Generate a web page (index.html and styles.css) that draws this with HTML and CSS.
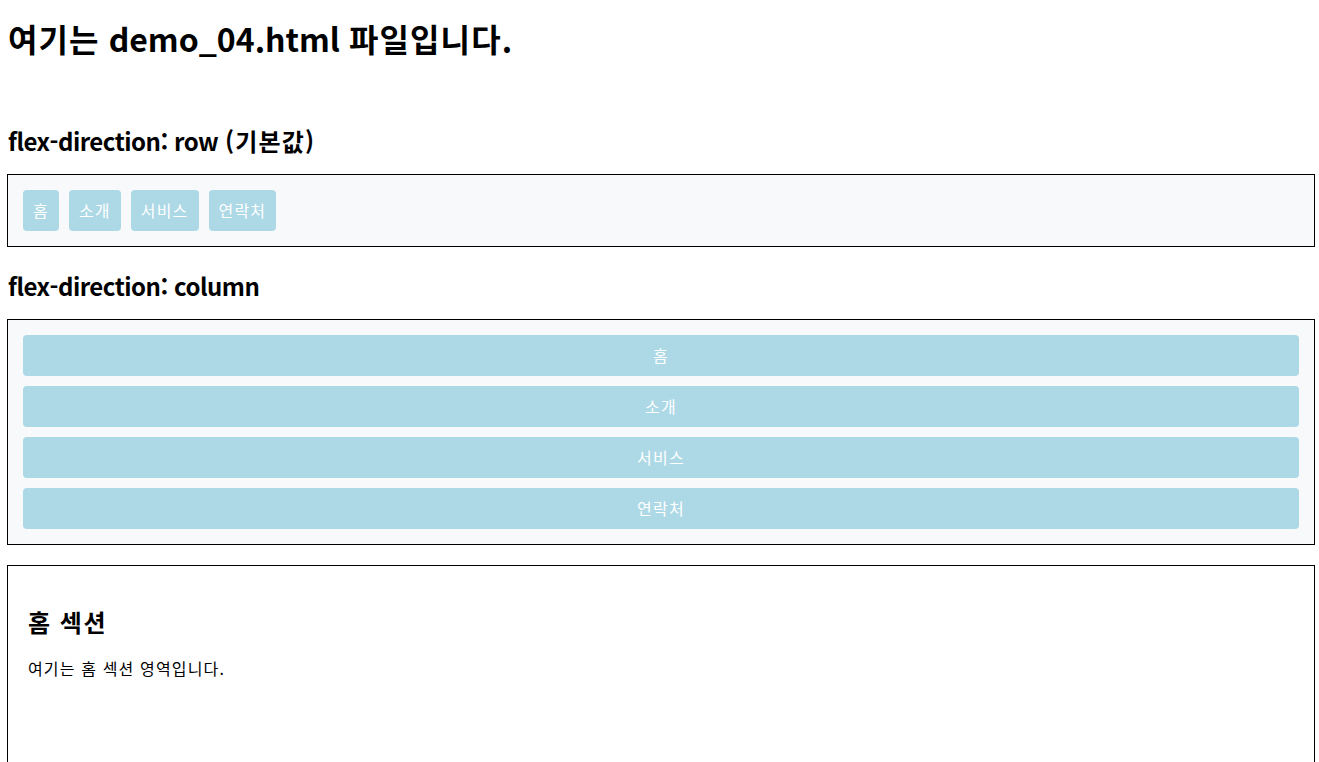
FILE: index.html
```html
<!DOCTYPE html>
<html lang="ko">
<head>
<meta charset="utf-8">
<title>demo_04</title>
<link rel="stylesheet" href="styles.css">
</head>
<body>
<h1 class="page-title"><span class="ko">여기는</span> demo_04.html <span class="ko">파일입니다.</span></h1>

<h2 class="demo-heading"><span class="latin">flex-direction: row</span> <span class="ko">(기본값)</span></h2>
<nav class="menu menu-row">
  <a class="menu-item">홈</a>
  <a class="menu-item">소개</a>
  <a class="menu-item">서비스</a>
  <a class="menu-item">연락처</a>
</nav>

<h2 class="demo-heading"><span class="latin">flex-direction: column</span></h2>
<nav class="menu menu-column">
  <a class="menu-item">홈</a>
  <a class="menu-item">소개</a>
  <a class="menu-item">서비스</a>
  <a class="menu-item">연락처</a>
</nav>

<section class="content-section">
  <h2 class="section-title">홈 섹션</h2>
  <p class="section-text">여기는 홈 섹션 영역입니다.</p>
</section>
</body>
</html>
```

FILE: styles.css
```css
html, body {
  margin: 0;
  padding: 0;
  background: #ffffff;
}

body {
  padding: 0 4px 0 7px;
  font-family: "Noto Sans CJK KR", "Noto Sans", sans-serif;
  color: #000000;
}

.page-title {
  font-size: 32px;
  font-weight: 700;
  line-height: 43px;
  margin: 17px 0 65px 1px;
}

.page-title .ko {
  letter-spacing: 0.035em;
}

.demo-heading {
  font-size: 24px;
  font-weight: 700;
  line-height: 32px;
  margin: 23px 0 17px 1px;
}

.demo-heading .latin {
  letter-spacing: -0.5px;
}

.demo-heading .ko {
  letter-spacing: 1.2px;
}

.menu {
  display: flex;
  gap: 10px;
  padding: 15px;
  border: 1px solid #000000;
  background: #f8f9fa;
}

.menu-row {
  flex-direction: row;
}

.menu-column {
  flex-direction: column;
}

.menu-item {
  display: block;
  padding: 10px;
  line-height: 21px;
  font-size: 16px;
  letter-spacing: 1.2px;
  color: #ffffff;
  background: #add8e6;
  border-radius: 4px;
  text-align: center;
  text-decoration: none;
}

.content-section {
  margin-top: 20px;
  padding: 20px;
  min-height: 400px;
  border: 1px solid #000000;
}

.section-title {
  font-size: 24px;
  font-weight: 700;
  line-height: 32px;
  letter-spacing: 1.5px;
  margin: 0 0 20px;
  padding-top: 20px;
}

.section-text {
  font-size: 16px;
  line-height: 21px;
  letter-spacing: 1.15px;
  margin: 0;
}
```
